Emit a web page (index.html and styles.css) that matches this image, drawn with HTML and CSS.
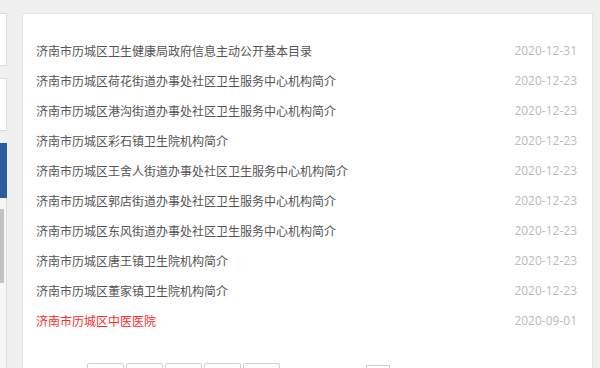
FILE: index.html
```html
<!DOCTYPE html>
<html lang="zh-CN">
<head>
    <meta charset="UTF-8">
    <meta name="viewport" content="width=device-width, initial-scale=1.0">
    <title>信息公开目录</title>
    <link rel="stylesheet" href="styles.css">
</head>
<body>
    <div class="page">
        <div class="sidebar">
            <div class="side-box"></div>
            <div class="side-box"></div>
            <div class="side-box active"></div>
            <div class="side-panel">
                <div class="side-scroll"></div>
            </div>
        </div>

        <div class="card">
            <ul class="news-list">
                <li><a href="#">济南市历城区卫生健康局政府信息主动公开基本目录</a><span class="date">2020-12-31</span></li>
                <li><a href="#">济南市历城区荷花街道办事处社区卫生服务中心机构简介</a><span class="date">2020-12-23</span></li>
                <li><a href="#">济南市历城区港沟街道办事处社区卫生服务中心机构简介</a><span class="date">2020-12-23</span></li>
                <li><a href="#">济南市历城区彩石镇卫生院机构简介</a><span class="date">2020-12-23</span></li>
                <li><a href="#">济南市历城区王舍人街道办事处社区卫生服务中心机构简介</a><span class="date">2020-12-23</span></li>
                <li><a href="#">济南市历城区郭店街道办事处社区卫生服务中心机构简介</a><span class="date">2020-12-23</span></li>
                <li><a href="#">济南市历城区东风街道办事处社区卫生服务中心机构简介</a><span class="date">2020-12-23</span></li>
                <li><a href="#">济南市历城区唐王镇卫生院机构简介</a><span class="date">2020-12-23</span></li>
                <li><a href="#">济南市历城区董家镇卫生院机构简介</a><span class="date">2020-12-23</span></li>
                <li><a href="#" class="hot">济南市历城区中医医院</a><span class="date">2020-09-01</span></li>
            </ul>

            <div class="pager">
                <a href="#" class="page-btn"></a>
                <a href="#" class="page-btn"></a>
                <a href="#" class="page-btn"></a>
                <a href="#" class="page-btn"></a>
                <a href="#" class="page-btn"></a>
                <span class="page-input"></span>
            </div>
        </div>
    </div>
</body>
</html>
```

FILE: styles.css
```css
/* Base */
body {
    margin: 0;
    padding: 0;
    background-color: #f0f0f0;
    font-family: "Noto Sans CJK SC", "Noto Sans", sans-serif;
    font-size: 12px;
    overflow: hidden;
}

.page {
    display: flex;
    align-items: flex-start;
    gap: 15px;
    height: 368px;
    overflow: hidden;
}

/* Left column (cut off at the edge) */
.sidebar {
    width: 7px;
    padding-top: 13px;
    display: flex;
    flex-direction: column;
    height: 355px;
}

.side-box {
    height: 51px;
    background: #fff;
    border: 1px solid #dcdcdc;
    border-left: none;
    margin-bottom: 12px;
}

.side-box.active {
    height: 53px;
    background: #2b5d9c;
    border-color: #2b5d9c;
    margin-bottom: 0;
}

.side-panel {
    flex: 1;
    background: #f7f7f7;
    border-right: 1px solid #dcdcdc;
    padding-top: 11px;
}

.side-scroll {
    width: 4px;
    height: 74px;
    background: #c2c2c2;
}

/* Main card */
.card {
    width: 569px;
    height: 400px;
    margin-top: 13px;
    background: #fff;
    border: 1px solid #e4e4e4;
}

.news-list {
    list-style: none;
    margin: 0;
    padding: 22px 15px 0 13px;
}

.news-list li {
    display: flex;
    justify-content: space-between;
    height: 30px;
    line-height: 30px;
}

.news-list a {
    color: #555;
    text-decoration: none;
}

.news-list a.hot {
    color: #ff2a2a;
}

.date {
    color: #bbb;
    font-family: "Open Sans", "Noto Sans", sans-serif;
    font-size: 12px;
}

/* Pagination */
.pager {
    display: flex;
    align-items: flex-start;
    gap: 2px;
    margin-top: 27px;
    padding-left: 64px;
}

.page-btn {
    width: 35px;
    height: 26px;
    border: 1px solid #cfcfcf;
    border-radius: 2px;
}

.page-input {
    width: 22px;
    height: 22px;
    margin-left: 84px;
    margin-top: 2px;
    border: 1px solid #cfcfcf;
}
```
